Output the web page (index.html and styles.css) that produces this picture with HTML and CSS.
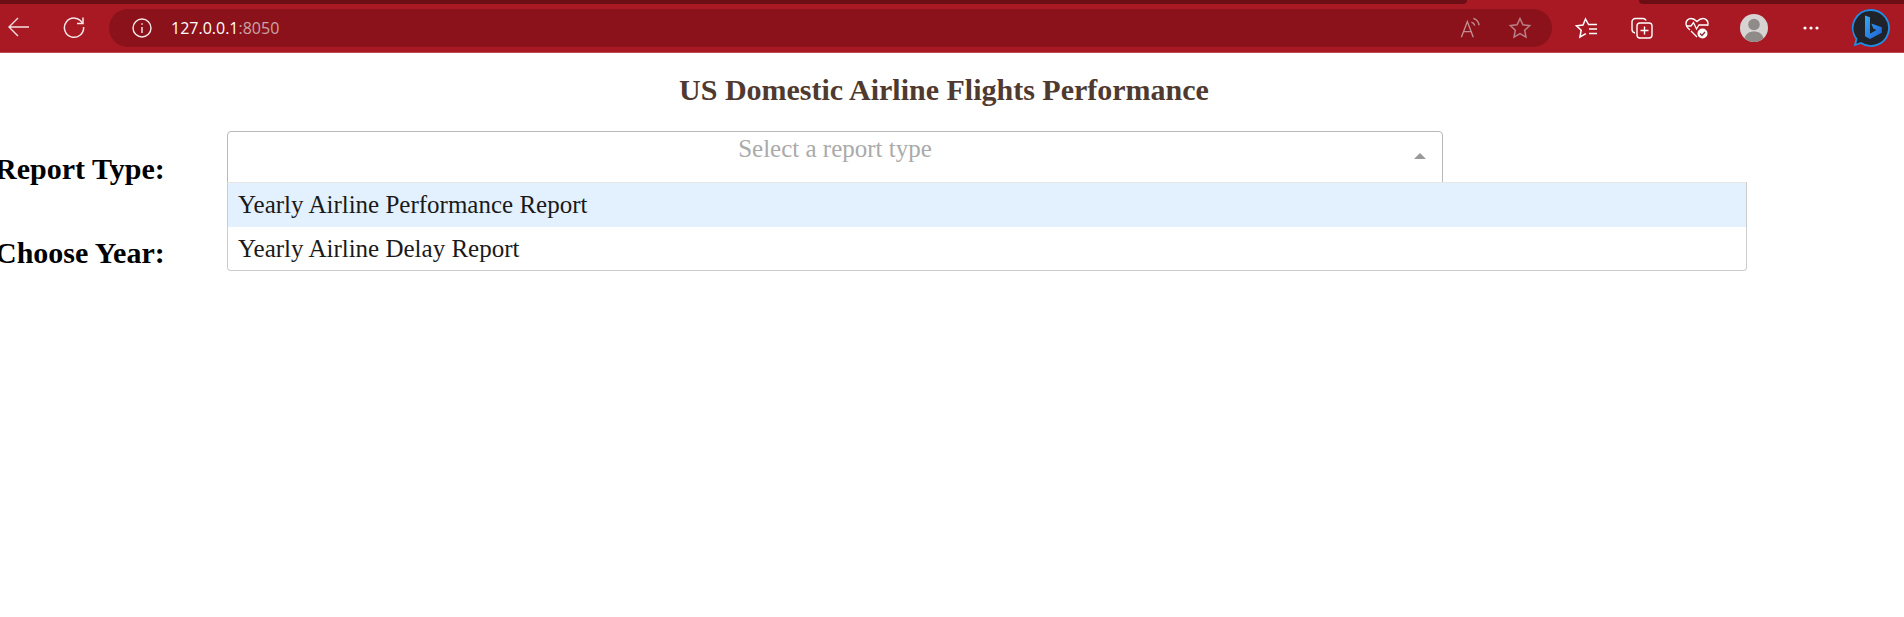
FILE: index.html
```html
<!DOCTYPE html>
<html lang="en">
<head>
<meta charset="utf-8">
<title>US Domestic Airline Flights Performance</title>
<link rel="stylesheet" href="styles.css">
</head>
<body>
<header class="browser">
  <div class="tabstrip"><div class="tab tab-left"></div><div class="tab tab-right"></div></div>
  <div class="toolbar">
    <button class="tool back" aria-label="Back"><svg width="24" height="24" viewBox="0 0 24 24" fill="none" stroke="#f6dfe0" stroke-width="1.4"><path d="M22 12H2.500M11 3l-9 9 9 9"/></svg></button>
    <button class="tool reload" aria-label="Reload"><svg width="24" height="24" viewBox="0 0 24 24" fill="none" stroke="#f6e6e7" stroke-width="1.500"><path d="M20.500 8.200A9.600 9.600 0 1 0 21.600 12"/><path d="M21 2.500v6h-6"/></svg></button>
    <div class="omnibox">
      <svg class="info" width="22" height="22" viewBox="0 0 22 22" fill="none" stroke="#f7e9ea" stroke-width="1.400"><circle cx="11" cy="11" r="9"/><path d="M11 10v6M11 6.200v1.600"/></svg>
      <span class="url"><span class="host">127.0.0.1</span><span class="port">:8050</span></span>
      <svg class="read" width="22" height="22" viewBox="0 0 24 24" fill="none" stroke="#c08e92" stroke-width="1.500"><path d="M1.500 22 8 5l6.500 17M4 16h8.500"/><path d="M12.500 5.500c2 .7 3.200 2 3.600 4M14.500 1.500c3.500 1 5.800 3.700 6.200 7.500"/></svg>
      <svg class="fav" width="24" height="24" viewBox="0 0 24 24" fill="none" stroke="#b98186" stroke-width="1.500"><path d="m12 2.500 2.900 6.300 6.800.8-5 4.700 1.300 6.800-6-3.400-6 3.400 1.300-6.800-5-4.700 6.800-.8z"/></svg>
    </div>
    <div class="actions">
      <svg class="act-fav" width="24" height="24" viewBox="0 0 24 24" fill="none" stroke="#fff" stroke-width="1.500"><path d="M13.500 8.500 10.500 3 8 9l-6.500.8 4.700 4.400-1.300 6.800 6-3.300"/><path d="M13 8.500h9M14 13h8M14 17.500h8"/></svg>
      <svg class="act-col" width="24" height="24" viewBox="0 0 24 24" fill="none" stroke="#fff" stroke-width="1.400"><path d="M5 17c-2-.5-3-2-3-3.500V6c0-2.200 1.500-3.500 3.500-3.500H13c1.500 0 2.500.8 3.200 2"/><rect x="7" y="7" width="15" height="15" rx="3"/><path d="M14.500 10.500v8M10.500 14.500h8"/></svg>
      <svg class="act-health" width="26" height="24" viewBox="0 0 26 24" fill="none"><path d="M6 14C3.500 12 2 10.500 2 7.500 2 4.500 4.500 2.500 7 2.500c2.300 0 4 1 6 3 2-2 3.700-3 6-3 2.500 0 5 2 5 5 0 1-.2 1.800-.5 2.500" stroke="#fff" stroke-width="1.400"/><path d="M2 10h5l2.500-3.500 3 6.500 2.500-4h8M7 15l6 6" stroke="#fff" stroke-width="1.300"/><circle cx="18.500" cy="17.500" r="5" fill="#fff"/><path d="m16 17.500 2 2 3-3.500" stroke="#8b2a32" stroke-width="1.300"/></svg>
      <svg class="avatar" width="28" height="28" viewBox="0 0 28 28"><circle cx="14" cy="14" r="14" fill="#d6d3d2"/><circle cx="14" cy="10.500" r="5.800" fill="#8f8b89"/><path d="M4.500 24c1.500-4.500 5-6.500 9.500-6.500s8 2 9.500 6.500A14 14 0 0 1 14 28a14 14 0 0 1-9.500-4z" fill="#8f8b89"/></svg>
      <svg class="more" width="16" height="4" viewBox="0 0 16 4" fill="#fff"><circle cx="2" cy="2" r="1.600"/><circle cx="8" cy="2" r="1.600"/><circle cx="14" cy="2" r="1.600"/></svg>
      <svg class="bing" width="40" height="40" viewBox="0 0 40 40">
        <defs><linearGradient id="bg" x1="0" y1="0" x2="1" y2="1"><stop offset="0" stop-color="#38a9f0"/><stop offset="1" stop-color="#1c5fd6"/></linearGradient></defs>
        <path d="M20 2a18 18 0 1 1-10 33l-6 2 1.500-6A18 18 0 0 1 20 2z" fill="#20242a" stroke="#1e8fe6" stroke-width="1.800"/>
        <path d="M14 7.500l5 1.700v16.600l6.500-3.700-3.200-1.500-2-5 10.500 3.700v5.400L19 31l-5-2.800z" fill="url(#bg)"/>
      </svg>
    </div>
  </div>
</header>
<main class="page">
  <h1 class="title">US Domestic Airline Flights Performance</h1>
  <div class="row">
    <label class="row-label">Report Type:</label>
    <div class="select open">
      <span class="placeholder">Select a report type</span>
      <span class="caret"></span>
      <ul class="menu">
        <li class="option focused">Yearly Airline Performance Report</li>
        <li class="option">Yearly Airline Delay Report</li>
      </ul>
    </div>
  </div>
  <div class="row">
    <label class="row-label">Choose Year:</label>
    <div class="select"></div>
  </div>
</main>
</body>
</html>
```
FILE: styles.css
```css
* { box-sizing: border-box; }
html, body { margin: 0; padding: 0; background: #fff; overflow: hidden; }
body { width: 1904px; height: 617px; font-family: "Liberation Serif", "Times New Roman", serif; }

.browser { height: 53px; background: #a91923; border-bottom: 1px solid #c04a52; display: flex; flex-direction: column; }
.tabstrip { height: 4px; display: flex; justify-content: space-between; flex: none; }
.tab { background: #6d0d14; height: 4px; }
.tab-left { width: 1467px; border-radius: 0 0 6px 0; }
.tab-right { width: 265px; border-radius: 0 0 0 6px; }
.toolbar { flex: 1; display: flex; align-items: flex-start; padding-top: 5px; }
.tool { width: 24px; height: 24px; padding: 0; border: 0; background: none; flex: none; margin-top: 6px; display: block; }
.back { margin-left: 7px; }
.reload { margin-left: 31px; }
.omnibox { margin-left: 23px; width: 1443px; height: 38px; border-radius: 19px; background: #8b121a; display: flex; align-items: center; padding-left: 22px; flex: none; }
.info { flex: none; }
.url { margin-left: 18px; font: 16px "Open Sans", sans-serif; }
.host { color: #fff; }
.port { color: #c9a4a7; }
.read { margin-left: auto; }
.fav { margin-left: 26px; margin-right: 20px; }
.actions { flex: 1; display: flex; align-items: center; height: 38px; }
.act-fav { margin-left: 23px; }
.act-col { margin-left: 31px; }
.act-health { margin-left: 30px; }
.avatar { margin-left: 30px; }
.more { margin-left: 35px; }
.bing { margin-left: 32px; }

.page { width: 1888px; }
.title { margin: 0; padding-top: 20px; height: 78px; font-size: 30px; line-height: 34px; font-weight: bold; text-align: center; color: #503a2f; }
.row { display: flex; height: 84px; }
.row-label { width: 227px; margin-left: -5px; margin-right: 5px; padding-top: 21px; font-size: 30px; line-height: 34px; font-weight: bold; color: #000; white-space: nowrap; flex: none; }
.select { width: 1216px; height: 52px; border: 1px solid #b8b8b8; border-radius: 4px; background: #fff; position: relative; text-align: center; flex: none; }
.select.open { border-radius: 4px 4px 0 0; }
.placeholder { display: block; padding-top: 2px; font-size: 25px; line-height: 30px; color: #aaa; }
.caret { position: absolute; right: 16px; top: 21px; width: 0; height: 0; border: 6px solid transparent; border-top: 0; border-bottom: 6px solid #999; }
.menu { position: absolute; z-index: 2; left: -1px; top: 50px; width: 1520px; margin: 0; padding: 0; list-style: none; background: #fff; border: 1px solid #ccc; border-top: 1px solid #e6e6e6; border-radius: 0 0 4px 4px; text-align: left; }
.option { height: 44px; padding: 0 10px; font-size: 25px; line-height: 44px; color: #1a1a1a; }
.option:last-child { height: 43px; }
.option.focused { background: #e3f1fe; }
```
